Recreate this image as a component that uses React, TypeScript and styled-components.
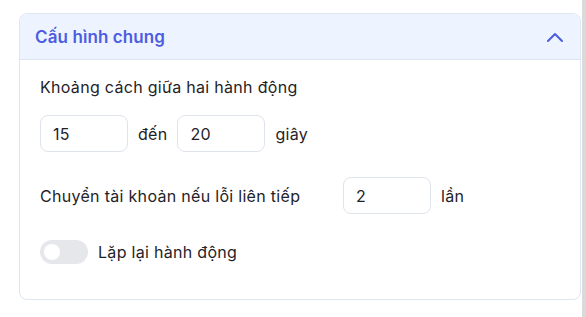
import React, { useState } from "react";
import styled, { createGlobalStyle } from "styled-components";

const Global = createGlobalStyle`
  html, body { margin: 0; padding: 0; background: #fff; }
  body { font-family: Inter, "Noto Sans", sans-serif; color: #1f2328; }
  * { box-sizing: border-box; }
`;

const Page = styled.div`
  display: flex;
  width: 586px;
  height: 317px;
  overflow: hidden;
`;

const Content = styled.div`
  flex: 1;
  padding: 13px 1px 0 19px;
`;

const ScrollTrack = styled.div`
  width: 4px;
  height: 317px;
  background: #dadada;
`;

const Card = styled.section`
  border: 1px solid #dde6f3;
  border-radius: 8px;
  overflow: hidden;
  background: #fff;
`;

const Header = styled.div`
  display: flex;
  align-items: center;
  justify-content: space-between;
  height: 46px;
  padding: 0 16px 0 15px;
  background: #eef4ff;
  border-bottom: 1px solid #dbe5f6;
`;

const Title = styled.h2`
  margin: 0;
  font-size: 17px;
  font-weight: 600;
  color: #4c5ddf;
  letter-spacing: 0.1px;
`;

const Body = styled.div`
  display: flex;
  flex-direction: column;
  padding: 15px 20px 35px 20px;
`;

const Label = styled.div`
  font-size: 16px;
  line-height: 24px;
  letter-spacing: 0.3px;
  color: #1f2328;
`;

const Row = styled.div<{ $mt: number }>`
  display: flex;
  align-items: center;
  gap: 10px;
  margin-top: ${(p) => p.$mt}px;
`;

const RowLabel = styled(Label)<{ $w?: number }>`
  width: ${(p) => (p.$w ? `${p.$w}px` : "auto")};
`;

const NumInput = styled.input`
  width: 88px;
  height: 37px;
  border: 1px solid #dfe3ea;
  border-radius: 8px;
  padding: 0 12px;
  font-family: inherit;
  font-size: 16px;
  letter-spacing: 0.3px;
  color: #1f2328;
  background: #fff;
  outline: none;
`;

const Switch = styled.button<{ $on: boolean }>`
  position: relative;
  width: 48px;
  height: 24px;
  border: none;
  border-radius: 12px;
  padding: 0;
  background: ${(p) => (p.$on ? "#4c5ddf" : "#e5e7eb")};
  cursor: pointer;
  &::after {
    content: "";
    position: absolute;
    top: 4px;
    left: ${(p) => (p.$on ? "28px" : "4px")};
    width: 16px;
    height: 16px;
    border-radius: 50%;
    background: #fff;
  }
`;

const Chevron = () => (
  <svg width="18" height="12" viewBox="0 0 18 12" fill="none">
    <path d="M2 10 L9 3 L16 10" stroke="#4c5ddf" strokeWidth="2" strokeLinecap="round" strokeLinejoin="round" />
  </svg>
);

export default function App() {
  const [on, setOn] = useState(false);
  return (
    <>
      <Global />
      <Page>
        <Content>
          <Card>
            <Header>
              <Title>Cấu hình chung</Title>
              <Chevron />
            </Header>
            <Body>
              <Label>Khoảng cách giữa hai hành động</Label>
              <Row $mt={16}>
                <NumInput defaultValue="15" />
                <Label>đến</Label>
                <NumInput defaultValue="20" />
                <Label>giây</Label>
              </Row>
              <Row $mt={25}>
                <RowLabel $w={293}>Chuyển tài khoản nếu lỗi liên tiếp</RowLabel>
                <NumInput defaultValue="2" />
                <Label>lần</Label>
              </Row>
              <Row $mt={26}>
                <Switch $on={on} onClick={() => setOn(!on)} aria-label="toggle" />
                <Label>Lặp lại hành động</Label>
              </Row>
            </Body>
          </Card>
        </Content>
        <ScrollTrack />
      </Page>
    </>
  );
}
